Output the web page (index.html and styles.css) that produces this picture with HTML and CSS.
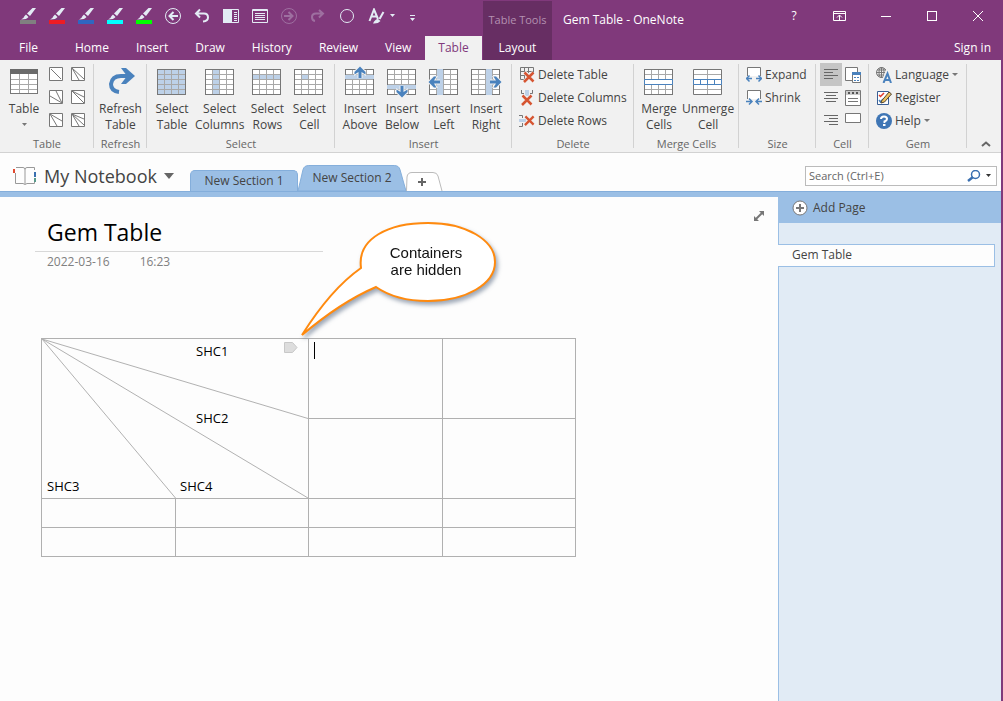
FILE: index.html
```html
<!DOCTYPE html>
<html lang="en">
<head>
    <meta charset="UTF-8">
    <meta name="viewport" content="width=device-width, initial-scale=1.0">
    <title>Gem Table - OneNote</title>
    <link rel="stylesheet" href="styles.css">
</head>
<body>
    <!-- shared icon parts -->
    <svg class="symbols" aria-hidden="true">
        <symbol id="brush" viewBox="0 0 16 12">
            <path d="M12.500 0H16L10 8L7 5.500Z" fill="#e3ecf5"/>
            <path d="M6 6.500L8.500 9Q7 11.500 1 11.500Q4 10 4.500 8Z" fill="#e3ecf5"/>
        </symbol>
        <symbol id="grid" viewBox="0 0 32 32">
            <path d="M8.500 3V29M15.500 3V29M22.500 3V29M1 8.500H30M1 13.500H30M1 18.500H30M1 23.500H30" stroke="#a8a8a8" fill="none"/>
            <rect x="1.500" y="3.500" width="28" height="25" stroke="#777" fill="none"/>
        </symbol>
        <symbol id="arrow" viewBox="0 0 12 12">
            <path d="M6 0.500L11.500 6V8.500L7.500 6V12H4.500V6L0.500 8.500V6Z" stroke="#f1f1f1" stroke-width="2" fill="#4a82bd" paint-order="stroke"/>
        </symbol>
        <symbol id="cross" viewBox="0 0 12 12">
            <path d="M1.500 1L10.500 10.500M10.500 1.500L1 11" stroke="#f1f1f1" stroke-width="4" fill="none"/>
            <path d="M1.500 1.500L10.500 10.500M10.500 1.500L1 11" stroke="#d65532" stroke-width="2.500" fill="none"/>
        </symbol>
    </svg>

    <div class="window">
        <header class="titlebar">
            <div class="titlebar-left">
                <div class="quick-access">
                    <button aria-label="Gray pen"><svg width="16" height="16"><use href="#brush" width="16" height="12"/><rect y="12" width="16" height="4" fill="#808080"/></svg></button>
                    <button aria-label="Red pen"><svg width="16" height="16"><use href="#brush" width="16" height="12"/><rect y="12" width="16" height="4" fill="#ed1c24"/></svg></button>
                    <button aria-label="Blue pen"><svg width="16" height="16"><use href="#brush" width="16" height="12"/><rect y="12" width="16" height="4" fill="#2f66c0"/></svg></button>
                    <button aria-label="Cyan highlighter"><svg width="16" height="16"><use href="#brush" width="16" height="12"/><rect y="12" width="16" height="4" fill="#00ffff"/></svg></button>
                    <button aria-label="Green highlighter"><svg width="16" height="16"><use href="#brush" width="16" height="12"/><rect y="12" width="16" height="4" fill="#00ff00"/></svg></button>
                    <button aria-label="Back"><svg width="16" height="16" fill="none" stroke="#e3ecf5"><circle cx="8" cy="8" r="7.500"/><path d="M13 8H4M8.500 4L4.500 8L8.500 12" stroke-width="2"/></svg></button>
                    <button aria-label="Undo"><svg width="16" height="16" fill="none" stroke="#e3ecf5" stroke-width="2"><path d="M6 1.500L2 5.500L6 9.500M2.500 5.500H10Q14 5.500 14 9.500Q14 13 9 13.500"/></svg></button>
                    <button aria-label="Dock to desktop"><svg width="16" height="16"><path d="M0 1H9V15H0Z" fill="#e3ecf5"/><path d="M9 1.500H15.500V14.500H9M11 4.500H14M11 6.500H14M11 8.500H14M11 10.500H14M11 12.500H14" fill="none" stroke="#e3ecf5"/></svg></button>
                    <button aria-label="Full page view"><svg width="16" height="16" fill="none" stroke="#e3ecf5"><path d="M0.500 1.500H15.500V14.500H0.500ZM0 2.500H16M3 5.500H13M3 7.500H13M3 9.500H13M3 11.500H13"/></svg></button>
                    <button class="dim" aria-label="Forward"><svg width="16" height="16" fill="none" stroke="#e3ecf5"><circle cx="8" cy="8" r="7.500"/><path d="M3 8H12M7.500 4L11.500 8L7.500 12" stroke-width="2"/></svg></button>
                    <button class="dim" aria-label="Redo"><svg width="16" height="16" fill="none" stroke="#e3ecf5" stroke-width="2"><path d="M9 2L13 5.500L9 9.500M12.500 5.500H6Q2 5.500 2 9Q2 12.500 5 13"/></svg></button>
                    <button aria-label="Shape"><svg width="16" height="16"><circle cx="8" cy="8" r="6.500" fill="none" stroke="#e3ecf5"/></svg></button>
                    <button aria-label="Styles"><svg width="28" height="16" fill="none" stroke="#e3ecf5"><path d="M1.500 13L6 1.500L10 11M3.500 8.500H9" stroke-width="2"/><path d="M15.500 4L11.500 11" stroke-width="2"/><path d="M5 15.500Q7 11 10 11L12.500 13Q10 16 5 15.500Z" fill="#e3ecf5" stroke="none"/><path d="M22 6H27L24.500 9Z" fill="#e3ecf5" stroke="none"/></svg></button>
                    <button aria-label="Customize toolbar"><svg width="8" height="16"><path d="M1 7H6V8H1ZM1 10H6L3.500 13Z" fill="#e3ecf5"/></svg></button>
                </div>
                <nav class="ribbon-tabs">
                    <button class="file-tab">File</button>
                    <button>Home</button>
                    <button>Insert</button>
                    <button>Draw</button>
                    <button>History</button>
                    <button>Review</button>
                    <button>View</button>
                    <button class="active">Table</button>
                </nav>
            </div>
            <div class="table-tools">
                <span>Table Tools</span>
                <button>Layout</button>
            </div>
            <div class="titlebar-right">
                <span class="window-title">Gem Table - OneNote</span>
                <div class="window-side">
                    <div class="window-controls">
                        <button aria-label="Help">?</button>
                        <button aria-label="Ribbon display options"><svg width="14" height="12" fill="none" stroke="#fff"><path d="M0.500 1.500H12.500V10.500H0.500ZM0 3.500H13M6.500 10V5M4 7.500L6.500 5L9 7.500"/></svg></button>
                        <button aria-label="Minimize"><svg width="12" height="12"><path d="M1 6.500H11" stroke="#fff"/></svg></button>
                        <button aria-label="Maximize"><svg width="12" height="12"><rect x="1.500" y="1.500" width="9" height="9" fill="none" stroke="#fff"/></svg></button>
                        <button aria-label="Close"><svg width="12" height="12"><path d="M1 1L11 11M11 1L1 11" stroke="#fff"/></svg></button>
                    </div>
                    <button class="sign-in">Sign in</button>
                </div>
            </div>
        </header>

        <div class="ribbon">
            <section class="group">
                <div class="group-body">
                    <button class="big">
                        <svg width="32" height="32"><path d="M2 4H30V28H2Z" fill="#fff"/><path d="M2 13.500H30M2 18.500H30M2 23.500H30M11.500 8V28M20.500 8V28" stroke="#a8a8a8"/><rect x="2.500" y="3.500" width="27" height="24" fill="none" stroke="#777"/><path d="M2 3H30V8H2Z" fill="#6a6a6a"/></svg>
                        <span>Table</span>
                        <svg width="5" height="16"><path d="M0 6H5L2.500 9Z" fill="#777"/></svg>
                    </button>
                    <div class="diagonals">
                        <button aria-label="Diagonal 1"><svg width="14" height="14"><path d="M0.500 0.500H13.500V13.500H0.500ZM2 2L12 12"/></svg></button>
                        <button aria-label="Diagonal 2"><svg width="14" height="14"><path d="M0.500 0.500H13.500V13.500H0.500ZM1 1L13 12M1 1L8 13"/></svg></button>
                        <button aria-label="Diagonal 3"><svg width="14" height="14"><path d="M0.500 0.500H13.500V13.500H0.500ZM1 6L13 13M7 1L13 13"/></svg></button>
                        <button aria-label="Diagonal 4"><svg width="14" height="14"><path d="M0.500 0.500H13.500V13.500H0.500ZM1 1L13 13M1 1L13 7"/></svg></button>
                        <button aria-label="Diagonal 5"><svg width="14" height="14"><path d="M0.500 0.500H13.500V13.500H0.500ZM1 1L13 8M1 1L8 13"/></svg></button>
                        <button aria-label="Diagonal 6"><svg width="14" height="14"><path d="M0.500 0.500H13.500V13.500H0.500ZM1 1L13 12M1 1L13 6M1 1L8 13"/></svg></button>
                    </div>
                </div>
                <h2>Table</h2>
            </section>

            <section class="group center">
                <div class="group-body">
                    <button class="big">
                        <svg width="32" height="32"><path d="M14 26Q6 25 6 18Q7 10 16 10H24" fill="none" stroke="#4a82bd" stroke-width="4"/><path d="M16 2H21L30 10L21 18H16L22 10Z" fill="#4a82bd"/></svg>
                        <span>Refresh<br>Table</span>
                    </button>
                </div>
                <h2>Refresh</h2>
            </section>

            <section class="group grids">
                <div class="group-body">
                    <button class="big">
                        <svg width="32" height="32"><path d="M2 4H29V28H2Z" fill="#bdd1e8"/><use href="#grid" width="32" height="32"/></svg>
                        <span>Select<br>Table</span>
                    </button>
                    <button class="big">
                        <svg width="32" height="32"><path d="M2 4H29V28H2Z" fill="#fff"/><path d="M9 4H15V28H9Z" fill="#bdd1e8"/><use href="#grid" width="32" height="32"/></svg>
                        <span>Select<br>Columns</span>
                    </button>
                    <button class="big">
                        <svg width="32" height="32"><path d="M2 4H29V28H2Z" fill="#fff"/><path d="M2 9H29V13H2Z" fill="#bdd1e8"/><use href="#grid" width="32" height="32"/></svg>
                        <span>Select<br>Rows</span>
                    </button>
                    <button class="big">
                        <svg width="32" height="32"><path d="M2 4H29V28H2Z" fill="#fff"/><path d="M9 9H15V13H9Z" fill="#bdd1e8"/><use href="#grid" width="32" height="32"/></svg>
                        <span>Select<br>Cell</span>
                    </button>
                </div>
                <h2>Select</h2>
            </section>

            <section class="group grids">
                <div class="group-body">
                    <button class="big">
                        <svg width="32" height="32"><path d="M2 4H29V28H2Z" fill="#fff"/><use href="#grid" width="32" height="32"/><path d="M1 9H30V13H1Z" fill="#bdd1e8"/><use href="#arrow" x="10" y="0" width="12" height="12"/></svg>
                        <span>Insert<br>Above</span>
                    </button>
                    <button class="big">
                        <svg width="32" height="32"><path d="M2 4H29V28H2Z" fill="#fff"/><use href="#grid" width="32" height="32"/><path d="M1 19H30V23H1Z" fill="#bdd1e8"/><g transform="rotate(180 16 26)"><use href="#arrow" x="10" y="20" width="12" height="12"/></g></svg>
                        <span>Insert<br>Below</span>
                    </button>
                    <button class="big">
                        <svg width="32" height="32"><path d="M2 4H29V28H2Z" fill="#fff"/><use href="#grid" width="32" height="32"/><path d="M9 3H15V29H9Z" fill="#bdd1e8"/><g transform="rotate(270 6 16)"><use href="#arrow" x="0" y="10" width="12" height="12"/></g></svg>
                        <span>Insert<br>Left</span>
                    </button>
                    <button class="big">
                        <svg width="32" height="32"><path d="M2 4H29V28H2Z" fill="#fff"/><use href="#grid" width="32" height="32"/><path d="M16 3H22V29H16Z" fill="#bdd1e8"/><g transform="rotate(90 26 16)"><use href="#arrow" x="20" y="10" width="12" height="12"/></g></svg>
                        <span>Insert<br>Right</span>
                    </button>
                </div>
                <h2>Insert</h2>
            </section>

            <section class="group">
                <div class="group-body list">
                    <button class="small"><svg width="16" height="16"><path d="M1.500 0.500H14.500V6M1.500 0.500V12.500H5M1 4.500H14M1 8.500H7M5.500 0V12M9.500 0V6" fill="none" stroke="#777"/><use href="#cross" x="4" y="4" width="12" height="12"/></svg>Delete Table</button>
                    <button class="small"><svg width="16" height="16"><path d="M2.500 0V3.500H5M13.500 0V3.500H11" fill="none" stroke="#777"/><path d="M6 0H10V6H6Z" fill="#bdd1e8"/><use href="#cross" x="2" y="4" width="12" height="12"/></svg>Delete Columns</button>
                    <button class="small"><svg width="16" height="16"><path d="M0 2.500H3.500V5M0 13.500H3.500V10" fill="none" stroke="#777"/><path d="M0 6H7V9H0Z" fill="#bdd1e8"/><use href="#cross" x="5" y="2" width="11" height="11"/></svg>Delete Rows</button>
                </div>
                <h2>Delete</h2>
            </section>

            <section class="group grids">
                <div class="group-body">
                    <button class="big">
                        <svg width="32" height="32"><path d="M2 4H29V28H2Z" fill="#fff"/><use href="#grid" width="32" height="32"/><path d="M1.500 13.500H29.500V18.500H1.500Z" fill="#fff" stroke="#4a82bd"/></svg>
                        <span>Merge<br>Cells</span>
                    </button>
                    <button class="big">
                        <svg width="32" height="32"><path d="M1.500 3.500H29.500V28.500H1.500Z" fill="#fff" stroke="#777"/><path d="M2 8.500H29M2 23.500H29M15.500 4V13M15.500 19V28" stroke="#a8a8a8"/><path d="M1.500 13.500H29.500V18.500H1.500ZM8.500 13V19M15.500 13V19M22.500 13V19" fill="#fff" stroke="#4a82bd"/></svg>
                        <span>Unmerge<br>Cell</span>
                    </button>
                </div>
                <h2>Merge Cells</h2>
            </section>

            <section class="group">
                <div class="group-body list">
                    <button class="small"><svg width="16" height="16"><path d="M1.500 9V0.500H14.500V9" fill="#fff" stroke="#777"/><path d="M0 11.500H6M3.500 8.500L0.500 11.500L3.500 14.500M10 11.500H16M12.500 8.500L15.500 11.500L12.500 14.500" fill="none" stroke="#4a82bd" stroke-width="1.500"/></svg>Expand</button>
                    <button class="small"><svg width="16" height="16"><path d="M1.500 9V0.500H14.500V9" fill="#fff" stroke="#777"/><path d="M0 11.500H6M3 8.500L6 11.500L3 14.500M10 11.500H16M13 8.500L10 11.500L13 14.500" fill="none" stroke="#4a82bd" stroke-width="1.500"/></svg>Shrink</button>
                </div>
                <h2>Size</h2>
            </section>

            <section class="group">
                <div class="group-body cell-tools">
                    <button class="selected" aria-label="Align left"><svg width="16" height="16"><path d="M1 2.500H15M1 5.500H10M1 8.500H15M1 11.500H10" stroke="#666"/></svg></button>
                    <button aria-label="Cell style"><svg width="16" height="16"><path d="M0.500 0.500H12.500V13.500H0.500Z" fill="#fff" stroke="#777"/><path d="M7.500 6.500H15.500V15.500H7.500Z" fill="#fff" stroke="#777"/><path d="M7 5H16V8H7Z" fill="#4a82bd"/><path d="M9 10H11V11H9ZM12 10H14V11H12ZM9 13H11V14H9ZM12 13H14V14H12Z" fill="#4a82bd"/></svg></button>
                    <button aria-label="Align center"><svg width="16" height="16"><path d="M1 2.500H15M3 5.500H13M1 8.500H15M3 11.500H13" stroke="#666"/></svg></button>
                    <button aria-label="Cell header"><svg width="16" height="16"><path d="M0.500 0.500H15.500V15.500H0.500Z" fill="#fff" stroke="#777"/><path d="M1 1H15V5H1Z" fill="#ccc"/><path d="M3 2H5V4H3ZM7 2H9V4H7ZM11 2H13V4H11Z" fill="#555"/><path d="M3 8.500H13M3 11.500H13" stroke="#777"/></svg></button>
                    <button aria-label="Align right"><svg width="16" height="16"><path d="M1 2.500H15M6 5.500H15M1 8.500H15M6 11.500H15" stroke="#666"/></svg></button>
                    <button aria-label="Empty cell"><svg width="16" height="16"><path d="M0.500 0.500H15.500V9.500H0.500Z" fill="#fff" stroke="#777"/></svg></button>
                </div>
                <h2>Cell</h2>
            </section>

            <section class="group">
                <div class="group-body list">
                    <button class="small"><svg width="16" height="16" fill="none"><circle cx="5.500" cy="5.500" r="5" stroke="#777"/><ellipse cx="5.500" cy="5.500" rx="2.500" ry="5" stroke="#777"/><path d="M5.500 0V11M0 5.500H11M1 3H10M1 8H8" stroke="#777"/><path d="M7 16L11 6L15 16M8.500 13H14" stroke="#f1f1f1" stroke-width="4"/><path d="M7.500 16L11.500 6.500L15 16M8.500 13H14" stroke="#4a82bd" stroke-width="2"/></svg>Language<i class="down"></i></button>
                    <button class="small"><svg width="16" height="16"><path d="M1.500 1.500H12.500V14.500H1.500Z" fill="#fff" stroke="#3a5f95"/><path d="M3 5L4.500 6.500L8 3" stroke="#e23a2a" stroke-width="1.500" fill="none"/><path d="M3 10L4.500 12L7 9" stroke="#4a82bd" stroke-width="1.500" fill="none"/><path d="M5.500 11L13 2L15.500 4L8.500 12L5 13Z" fill="#edc15f" stroke="#4f4434"/></svg>Register</button>
                    <button class="small"><svg width="16" height="16"><circle cx="8" cy="8" r="8" fill="#3f76b5"/><path d="M5 6Q5 3.500 8 3.500Q11 3.500 11 6Q11 7.500 8.500 8.500V10" fill="none" stroke="#fff" stroke-width="2"/><path d="M7 11H9.500V13H7Z" fill="#fff"/></svg>Help<i class="down"></i></button>
                </div>
                <h2>Gem</h2>
            </section>

            <button class="collapse" aria-label="Collapse the ribbon"><svg width="10" height="8"><path d="M1 6L5 2.500L9 6" fill="none" stroke="#666" stroke-width="2"/></svg></button>
        </div>

        <div class="notebook-bar">
            <button class="notebook">
                <svg width="24" height="20" fill="none"><path d="M3 1.500H10Q12 1.500 12 3.500V18M12 3.500Q12 1.500 14 1.500H21.500V4M21.500 16V17.500H14L12 18.500L10 17.500H2.500V7" stroke="#999"/><path d="M1 3V7" stroke="#e2492f" stroke-width="2"/><path d="M22 6V11" stroke="#3a6fb0" stroke-width="2"/><path d="M22 12V16" stroke="#5a9a8b" stroke-width="2"/></svg>
                <span>My Notebook</span>
                <svg width="10" height="6"><path d="M0 0H10L5 6Z" fill="#666"/></svg>
            </button>
            <div class="section-tabs">
                <button class="section-tab">New Section 1</button>
                <button class="section-tab current">
                    <svg viewBox="0 0 110 26" preserveAspectRatio="none"><path d="M0 26L5 5Q6 0.500 11 0.500H98Q103 0.500 104 5L110 26Z" fill="#9bbfe5" stroke="#84aedb"/></svg>
                    <span>New Section 2</span>
                </button>
                <button class="add-section" aria-label="Create a new section"><svg width="37" height="19"><path d="M0.500 19L1 5Q1.500 0.500 6 0.500H27Q31 0.500 32 4L36 19" fill="#fff" stroke="#bbb"/><path d="M16 6V14M12 10H20" stroke="#666" stroke-width="2"/></svg></button>
            </div>
            <div class="search">
                <input type="text" aria-label="Search" placeholder="Search (Ctrl+E)">
                <button aria-label="Search now"><svg width="14" height="12" fill="none" stroke="#3a6fb0"><circle cx="8.500" cy="4.500" r="4" stroke-width="1.500"/><path d="M6 7L1 11" stroke-width="2.500"/></svg></button>
                <button aria-label="Search scope"><svg width="5" height="4"><path d="M0 0H5L2.500 3Z" fill="#333"/></svg></button>
            </div>
        </div>

        <div class="workspace">
            <main class="page">
                <button class="fullscreen" aria-label="Full page view"><svg width="12" height="12"><path d="M2 10L10 2" stroke="#777" stroke-width="2"/><path d="M6 1H11V6ZM1 6V11H6Z" fill="#777"/></svg></button>
                <h1>Gem Table</h1>
                <p class="date"><span>2022-03-16</span><span>16:23</span></p>

                <div class="note">
                    <table>
                        <colgroup><col><col><col><col></colgroup>
                        <tr class="tall">
                            <td colspan="2" rowspan="2">
                                <div class="split-head">
                                    <svg viewBox="0 0 267 160" preserveAspectRatio="none" fill="none" stroke="#b0b0b0"><path d="M0 0L267 80M0 0L267 160M0 0L134 160"/></svg>
                                    <span class="inner">SHC1</span>
                                    <span class="inner">SHC2</span>
                                    <span class="low">SHC3</span>
                                    <span class="low">SHC4</span>
                                    <svg class="handle" width="14" height="12"><path d="M0.500 0.500H8.500L13 5.500L8.500 10.500H0.500Z" fill="#ddd" stroke="#c8c8c8"/></svg>
                                </div>
                            </td>
                            <td><span class="cursor"></span></td>
                            <td></td>
                        </tr>
                        <tr class="tall"><td></td><td></td></tr>
                        <tr><td></td><td></td><td></td><td></td></tr>
                        <tr><td></td><td></td><td></td><td></td></tr>
                    </table>

                    <div class="callout">
                        <svg width="206" height="124"><path d="M66 52C62 22 94 7 133 7C171 7 200 24 200 46C200 68 171 85 133 85C112 85 94 80 81 71Q46 86 7 119Q36 73 66 52Z" fill="#fff" stroke="#ff8a0f" stroke-width="2"/></svg>
                        <p>Containers<br>are hidden</p>
                    </div>
                </div>
            </main>

            <aside class="pages">
                <button class="add-page"><svg width="16" height="16"><circle cx="8" cy="8" r="7" fill="#fff" stroke="#777"/><path d="M8 4V12M4 8H12" stroke="#777" stroke-width="2"/></svg>Add Page</button>
                <a class="page-link" href="#">Gem Table</a>
            </aside>
        </div>
    </div>
</body>
</html>
```
FILE: styles.css
```css
* {
    box-sizing: border-box;
}
body {
    margin: 0;
    font-family: "Open Sans", "Noto Sans", sans-serif;
    font-size: 12px;
    line-height: 16px;
    color: #444;
    background-color: #fdfdfd;
}
button {
    margin: 0;
    padding: 0;
    border: none;
    background: none;
    font: inherit;
    color: inherit;
    cursor: pointer;
}
svg {
    display: block;
    flex-shrink: 0;
}
h1, h2, p {
    margin: 0;
    font-weight: normal;
}
.symbols {
    position: absolute;
    width: 0;
    height: 0;
}
.window {
    display: flex;
    flex-direction: column;
    min-height: 100vh;
    border-right: 2px solid #80397b;
}

/* title bar */
.titlebar {
    display: flex;
    height: 60px;
    color: #fff;
    background-color: #80397b;
}
.titlebar-left {
    display: flex;
    flex-direction: column;
    justify-content: space-between;
    width: 483px;
}
.quick-access {
    display: flex;
    align-items: center;
    gap: 13px;
    height: 32px;
    padding-left: 20px;
}
.quick-access .dim {
    opacity: 0.3;
}
.ribbon-tabs {
    display: flex;
    gap: 1px;
    height: 24px;
}
.ribbon-tabs button {
    padding: 0 13px;
}
.ribbon-tabs .file-tab {
    padding: 0 23px 0 19px;
}
.ribbon-tabs .active {
    color: #80397b;
    background-color: #f1f1f1;
}
.table-tools {
    display: flex;
    flex-direction: column;
    justify-content: space-between;
    align-items: center;
    width: 69px;
    margin-top: 1px;
    padding: 11px 0 4px;
    background-color: #672e63;
}
.table-tools span {
    font-size: 11px;
    white-space: nowrap;
    color: #b491b1;
}
.titlebar-right {
    display: flex;
    flex: 1;
    justify-content: space-between;
    padding-left: 11px;
}
.window-title {
    padding-top: 12px;
}
.window-side {
    display: flex;
    flex-direction: column;
    justify-content: space-between;
    align-items: flex-end;
}
.window-controls {
    display: flex;
    height: 32px;
}
.window-controls button {
    display: flex;
    align-items: center;
    justify-content: center;
    width: 46px;
}
.sign-in {
    padding: 0 10px 4px;
}

/* ribbon */
.ribbon {
    display: grid;
    grid-template-columns: 94px 53px 188px 177px 122px 105px 77px 53px 98px 1fr;
    height: 93px;
    background-color: #f1f1f1;
    border-bottom: 1px solid #d2d2d2;
}
.group {
    display: flex;
    flex-direction: column;
    position: relative;
    padding-top: 3px;
}
.group::after {
    content: "";
    position: absolute;
    top: 4px;
    right: 0;
    bottom: 4px;
    width: 1px;
    background-color: #d2d2d2;
}
.group h2 {
    font-size: 11px;
    text-align: center;
    color: #666;
}
.group-body {
    display: flex;
    align-items: flex-start;
    height: 73px;
    padding-left: 3px;
}
.grids .group-body {
    padding-left: 4px;
}
.center .group-body {
    justify-content: center;
    padding-left: 0;
}
.big {
    display: flex;
    flex-direction: column;
    align-items: center;
    min-width: 42px;
    padding: 3px 2px 0;
}
.big span {
    padding-top: 3px;
}
.diagonals {
    display: grid;
    grid-template-columns: 14px 14px;
    gap: 9px 8px;
    padding: 4px 0 0 4px;
}
.diagonals path {
    fill: #fff;
    stroke: #777;
}
.group-body.list {
    flex-direction: column;
    padding-left: 7px;
}
.small {
    display: flex;
    align-items: center;
    gap: 3px;
    height: 23px;
    white-space: nowrap;
}
.down {
    border: 3px solid transparent;
    border-top-color: #777;
    border-bottom: none;
}
.group-body.cell-tools {
    display: grid;
    grid-template-columns: 22px 22px;
    grid-auto-rows: 23px;
    padding-left: 4px;
}
.cell-tools button {
    display: flex;
    align-items: center;
    justify-content: center;
    height: 23px;
}
.cell-tools .selected {
    background-color: #c5c5c5;
}
.collapse {
    align-self: end;
    justify-self: end;
    padding: 4px 10px;
}

/* notebook bar */
.notebook-bar {
    display: flex;
    align-items: flex-end;
    height: 38px;
}
.notebook {
    display: flex;
    align-items: center;
    gap: 7px;
    width: 190px;
    height: 30px;
    padding-left: 13px;
    font-size: 18px;
    white-space: nowrap;
}
.section-tabs {
    display: flex;
    flex: 1;
    align-items: flex-end;
}
.section-tab {
    width: 108px;
    height: 21px;
    border: 1px solid #84aedb;
    border-bottom: none;
    border-radius: 5px 5px 0 0;
    background-color: #9bbfe5;
}
.section-tab.current {
    position: relative;
    height: 26px;
    border: none;
    background: none;
}
.current svg {
    position: absolute;
    inset: 0;
    width: 100%;
    height: 100%;
}
.current span {
    position: relative;
}
.search {
    display: flex;
    align-items: center;
    width: 192px;
    height: 20px;
    margin: 0 4px 5px 0;
    border: 1px solid #bbb;
    background-color: #fff;
}
.search input {
    flex: 1;
    min-width: 0;
    padding: 0 3px;
    border: none;
    outline: none;
    font: inherit;
    font-size: 11px;
    background: none;
}
.search input::placeholder {
    color: #666;
}
.search button {
    padding: 0 5px 0 0;
}

/* page area */
.workspace {
    display: flex;
    flex: 1;
    border-top: 1px solid #84aedb;
}
.page {
    flex: 1;
    position: relative;
    padding: 19px 0 0 35px;
    border-top: 5px solid #9bbfe5;
}
.fullscreen {
    position: absolute;
    top: 13px;
    right: 13px;
}
.page h1 {
    width: 288px;
    height: 36px;
    padding-left: 12px;
    border-bottom: 1px solid #d8d8d8;
    font-size: 23px;
    line-height: 32px;
    color: #000;
}
.date {
    display: flex;
    gap: 30px;
    padding: 2px 12px;
    color: #808080;
}
.note {
    position: relative;
    width: 535px;
    margin: 66px 0 0 6px;
}
.note table {
    width: 100%;
    border-collapse: collapse;
    table-layout: fixed;
}
.note td {
    height: 29px;
    padding: 0;
    vertical-align: top;
    border: 1px solid #b0b0b0;
}
.note .tall td {
    height: 80px;
}
.split-head {
    display: grid;
    grid-template-columns: 1fr 1fr;
    grid-template-rows: 67px 68px 20px;
    position: relative;
    height: 159px;
    padding-top: 4px;
    font-size: 13px;
    color: #000;
}
.split-head svg {
    position: absolute;
    inset: 0;
    width: 100%;
    height: 100%;
}
.split-head .handle {
    inset: 3px 10px auto auto;
    width: 14px;
    height: 12px;
}
.inner {
    grid-column: 2;
    padding-left: 21px;
}
.low {
    padding-left: 5px;
}
.cursor {
    display: block;
    width: 1px;
    height: 17px;
    margin: 3px 5px;
    background-color: #000;
}
.callout {
    position: absolute;
    bottom: 217px;
    left: 254px;
    filter: drop-shadow(2px 3px 2px rgba(60, 80, 110, 0.5));
}
.callout p {
    position: absolute;
    top: 28px;
    left: 64px;
    width: 134px;
    font-family: "Liberation Sans", Arial, sans-serif;
    font-size: 15px;
    line-height: 17px;
    text-align: center;
    color: #111;
}

/* page list */
.pages {
    width: 223px;
    border-left: 1px solid #9bbfe5;
    background-color: #e1ebf5;
}
.add-page {
    display: flex;
    align-items: center;
    gap: 5px;
    width: 100%;
    height: 31px;
    padding-left: 13px;
    background-color: #9bbfe5;
}
.page-link {
    display: block;
    margin: 21px 6px 0 -1px;
    padding: 2px 14px 3px;
    border: 1px solid #9bbfe5;
    border-left: none;
    color: #444;
    text-decoration: none;
    background-color: #fdfdfd;
}
```
